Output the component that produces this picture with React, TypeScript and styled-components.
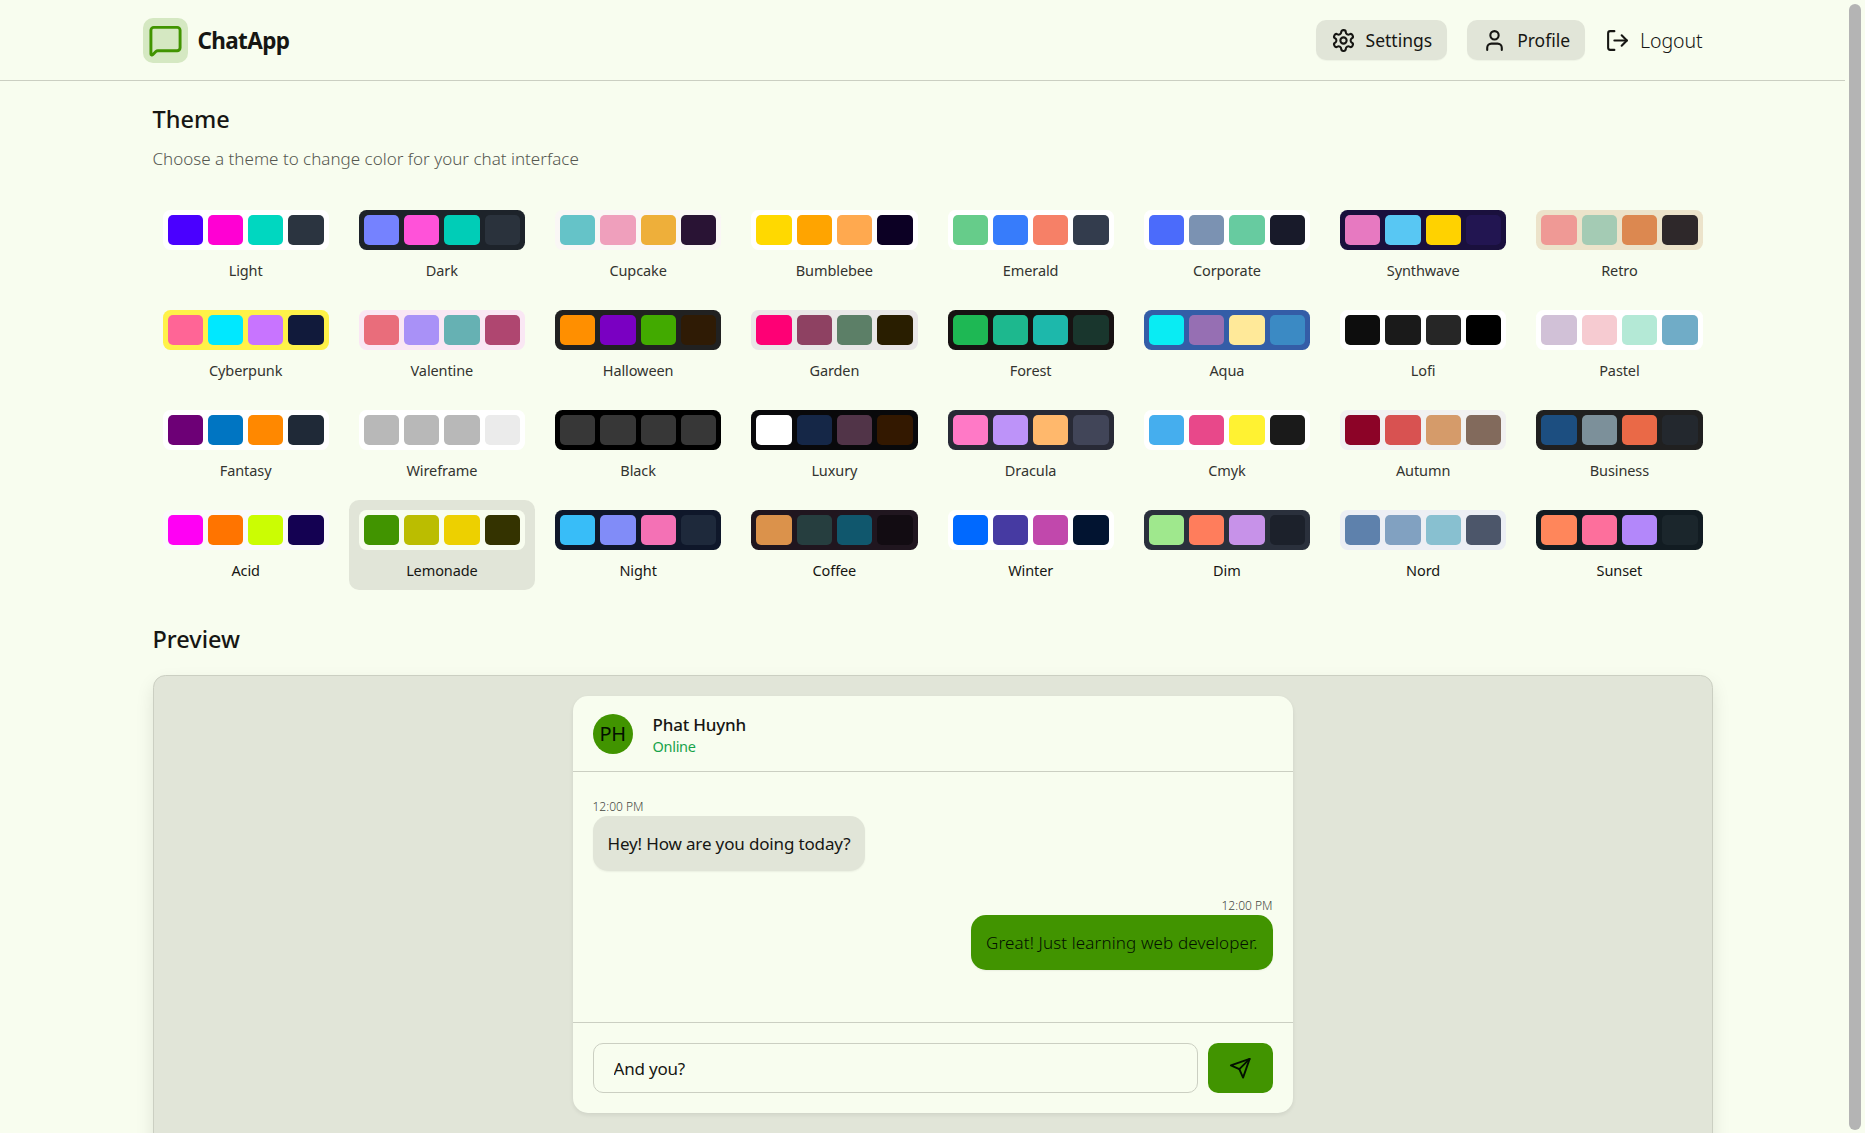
import React from "react";
import styled, { createGlobalStyle } from "styled-components";
import { LogOut, MessageSquare, User } from "lucide-react";

const THEMES: { name: string; bg: string; colors: string[] }[] = [
  { name: "Light", bg: "#ffffff", colors: ["#4a00ff", "#ff00d3", "#00d7c0", "#2b3440"] },
  { name: "Dark", bg: "#1d232a", colors: ["#7582ff", "#ff52d9", "#00cdb7", "#2a323c"] },
  { name: "Cupcake", bg: "#faf7f5", colors: ["#65c3c8", "#ef9fbc", "#eeaf3a", "#291334"] },
  { name: "Bumblebee", bg: "#ffffff", colors: ["#ffd900", "#ffa400", "#ffa94f", "#0c0024"] },
  { name: "Emerald", bg: "#ffffff", colors: ["#66cc8a", "#377cfb", "#f68067", "#333c4d"] },
  { name: "Corporate", bg: "#ffffff", colors: ["#4b6bfb", "#7b92b2", "#67cba0", "#181a2a"] },
  { name: "Synthwave", bg: "#1a103d", colors: ["#e779c1", "#58c7f3", "#ffd200", "#221551"] },
  { name: "Retro", bg: "#ece3ca", colors: ["#ef9995", "#a4cbb4", "#dc8850", "#2e282a"] },
  { name: "Cyberpunk", bg: "#fff248", colors: ["#ff6596", "#00e8ff", "#c874ff", "#111a3b"] },
  { name: "Valentine", bg: "#fae7f4", colors: ["#e96d7b", "#a991f7", "#66b1b3", "#af4670"] },
  { name: "Halloween", bg: "#212121", colors: ["#ff8f00", "#7a00c2", "#42aa00", "#2f1b05"] },
  { name: "Garden", bg: "#e9e7e7", colors: ["#fe0075", "#8e4162", "#5c7f67", "#291e00"] },
  { name: "Forest", bg: "#171212", colors: ["#1eb854", "#1db88e", "#1db8ab", "#19362d"] },
  { name: "Aqua", bg: "#345da7", colors: ["#09ecf3", "#966fb3", "#ffe999", "#3b8ac4"] },
  { name: "Lofi", bg: "#ffffff", colors: ["#0d0d0d", "#1a1a1a", "#262626", "#000000"] },
  { name: "Pastel", bg: "#ffffff", colors: ["#d1c1d7", "#f6cbd1", "#b4e9d6", "#70acc7"] },
  { name: "Fantasy", bg: "#ffffff", colors: ["#6d0076", "#0075c2", "#ff8800", "#1f2937"] },
  { name: "Wireframe", bg: "#ffffff", colors: ["#b8b8b8", "#b8b8b8", "#b8b8b8", "#ebebeb"] },
  { name: "Black", bg: "#000000", colors: ["#373737", "#373737", "#373737", "#373737"] },
  { name: "Luxury", bg: "#09090b", colors: ["#ffffff", "#152747", "#513448", "#331800"] },
  { name: "Dracula", bg: "#282a36", colors: ["#ff79c6", "#bd93f9", "#ffb86c", "#414558"] },
  { name: "Cmyk", bg: "#ffffff", colors: ["#45aeee", "#e8488a", "#fff232", "#1a1a1a"] },
  { name: "Autumn", bg: "#f1f1f1", colors: ["#8c0327", "#d85251", "#d59b6a", "#826a5c"] },
  { name: "Business", bg: "#202020", colors: ["#1c4e80", "#7c909a", "#ea6947", "#23282e"] },
  { name: "Acid", bg: "#fafafa", colors: ["#ff00f4", "#ff7400", "#cbfd03", "#140152"] },
  { name: "Lemonade", bg: "#f8fdef", colors: ["#419400", "#bbbd00", "#edd000", "#343300"] },
  { name: "Night", bg: "#0f172a", colors: ["#38bdf8", "#818cf8", "#f471b5", "#1e293b"] },
  { name: "Coffee", bg: "#20161f", colors: ["#db924b", "#263e3f", "#10576d", "#120c12"] },
  { name: "Winter", bg: "#ffffff", colors: ["#0069ff", "#463aa2", "#c148ac", "#021431"] },
  { name: "Dim", bg: "#2a303c", colors: ["#9fe88d", "#ff7d5c", "#c792e9", "#1c212b"] },
  { name: "Nord", bg: "#eceff4", colors: ["#5e81ac", "#81a1c1", "#88c0d0", "#4c566a"] },
  { name: "Sunset", bg: "#121c22", colors: ["#ff865b", "#fd6f9c", "#b387fa", "#1b262c"] },
];

const GlobalStyle = createGlobalStyle`
  html, body {
    margin: 0;
    height: 100%;
    overflow: hidden;
    background: #f8fdef;
    color: #161613;
    font-family: "Noto Sans", "Open Sans", sans-serif;
  }
  * { box-sizing: border-box; }
`;

const Page = styled.div`
  display: flex;
  height: 100vh;
  overflow: hidden;
`;

const Main = styled.div`
  flex: 1;
  min-width: 0;
  height: 100%;
  overflow: hidden;
`;

const ScrollTrack = styled.div`
  width: 20px;
  flex: none;
  padding: 4px 4px 3px 4px;
`;

const ScrollThumb = styled.div`
  width: 12px;
  height: 100%;
  background: #b4b4b4;
  border-radius: 6px;
`;

const Header = styled.header`
  height: 81px;
  border-bottom: 1px solid #cbcfc2;
`;

const HeaderInner = styled.div`
  width: 1600px;
  height: 80px;
  margin: 0 auto;
  padding: 0 20px;
  display: flex;
  align-items: center;
  justify-content: space-between;
`;

const Brand = styled.div`
  display: flex;
  align-items: center;
  gap: 10px;
`;

const LogoBox = styled.div`
  width: 45px;
  height: 45px;
  border-radius: 10px;
  background: #d5e8c2;
  color: #419400;
  display: flex;
  align-items: center;
  justify-content: center;
`;

const BrandName = styled.h1`
  margin: 0;
  font-size: 22.5px;
  font-weight: 700;
  letter-spacing: -0.65px;
`;

const Nav = styled.nav`
  display: flex;
  align-items: center;
  gap: 20px;
`;

const NavButton = styled.a`
  height: 40px;
  padding: 0 15px;
  display: flex;
  align-items: center;
  gap: 10px;
  border-radius: 10px;
  background: #e1e5d8;
  font-size: 17.5px;
  box-shadow: 0 1px 1px rgba(0, 0, 0, 0.04);
`;

const LogoutLink = styled.a`
  display: flex;
  align-items: center;
  gap: 10px;
  font-size: 19.5px;
  font-weight: 300;
  letter-spacing: -0.1px;
`;

const Content = styled.main`
  width: 1560px;
  margin-left: 152.5px;
  padding-top: 20.5px;
`;

const Heading = styled.h2`
  margin: 0;
  font-size: 23.5px;
  line-height: 35px;
  font-weight: 500;
`;

const Subtitle = styled.p`
  margin: 9px 0 0;
  font-size: 17px;
  line-height: 25px;
  font-weight: 300;
  color: #55574f;
`;

const ThemeGrid = styled.div`
  display: grid;
  grid-template-columns: repeat(8, 1fr);
  gap: 10px;
  margin-top: 29.5px;
`;

const ThemeCell = styled.button<{ $active?: boolean }>`
  border: 0;
  height: 90px;
  padding: 10px;
  display: flex;
  flex-direction: column;
  align-items: stretch;
  justify-content: flex-start;
  gap: 10px;
  border-radius: 10px;
  background: ${(p) => (p.$active ? "#e1e5d8" : "transparent")};
  font: inherit;
`;

const SwatchRow = styled.div<{ $bg: string }>`
  height: 40px;
  flex: none;
  padding: 5px;
  display: grid;
  grid-template-columns: repeat(4, 1fr);
  gap: 5px;
  border-radius: 7.5px;
  background: ${(p) => p.$bg};
`;

const Swatch = styled.div<{ $color: string }>`
  border-radius: 5px;
  background: ${(p) => p.$color};
`;

const ThemeName = styled.span<{ $strong?: boolean }>`
  display: block;
  text-align: center;
  font-size: 14.5px;
  line-height: 21px;
  letter-spacing: -0.1px;
  color: ${(p) => (p.$strong ? "#161613" : "#33342f")};
`;

const PreviewHeading = styled(Heading)`
  margin-top: 32px;
`;

const PreviewPanel = styled.div`
  margin-top: 18px;
  height: 500px;
  padding: 20px;
  background: #e1e5d8;
  border: 1px solid #cbcfc2;
  border-radius: 12.5px;
  box-shadow: 0 8px 18px rgba(0, 0, 0, 0.1);
`;

const ChatCard = styled.div`
  width: 720px;
  height: 417px;
  margin: 0 auto;
  display: flex;
  flex-direction: column;
  background: #f8fdef;
  border-radius: 15px;
  box-shadow: 0 2px 4px rgba(0, 0, 0, 0.08);
`;

const ChatHeader = styled.div`
  height: 76px;
  padding: 0 20px;
  display: flex;
  align-items: center;
  gap: 20px;
  border-bottom: 1px solid #cbcfc2;
`;

const Avatar = styled.div`
  width: 40px;
  height: 40px;
  flex: none;
  border-radius: 50%;
  background: #419400;
  color: #021000;
  display: flex;
  align-items: center;
  justify-content: center;
  font-size: 20px;
  letter-spacing: -0.5px;
`;

const PersonInfo = styled.div`
  display: flex;
  flex-direction: column;
  padding-top: 2px;
`;

const PersonName = styled.span`
  font-size: 17px;
  line-height: 24px;
  font-weight: 500;
  letter-spacing: -0.2px;
`;

const PersonStatus = styled.span`
  font-size: 14.5px;
  line-height: 19px;
  letter-spacing: -0.3px;
  color: #16a34a;
`;

const Messages = styled.div`
  flex: 1;
  padding: 25px 20px 0;
  display: flex;
  flex-direction: column;
  gap: 24.5px;
`;

const Message = styled.div<{ $mine?: boolean }>`
  display: flex;
  flex-direction: column;
  align-items: ${(p) => (p.$mine ? "flex-end" : "flex-start")};
`;

const Timestamp = styled.span`
  font-size: 12px;
  line-height: 19px;
  font-weight: 300;
  color: #44463f;
`;

const Bubble = styled.div<{ $mine?: boolean }>`
  height: 55px;
  padding: 0 15px;
  display: flex;
  align-items: center;
  border-radius: 15px;
  font-size: 17px;
  font-weight: ${(p) => (p.$mine ? 300 : 400)};
  letter-spacing: ${(p) => (p.$mine ? "0.13px" : "-0.15px")};
  background: ${(p) => (p.$mine ? "#419400" : "#e1e5d8")};
  color: ${(p) => (p.$mine ? "#021000" : "#161613")};
  box-shadow: 0 1px 2px rgba(0, 0, 0, 0.06);
`;

const Composer = styled.div`
  height: 91px;
  padding: 20px;
  display: flex;
  gap: 10px;
  border-top: 1px solid #cbcfc2;
`;

const ComposerInput = styled.input`
  flex: 1;
  min-width: 0;
  height: 50px;
  padding: 0 20px;
  border: 1px solid #cbcfc2;
  border-radius: 10px;
  background: transparent;
  color: #161613;
  font-family: inherit;
  font-size: 17px;
  letter-spacing: -0.2px;
  outline: none;
`;

const SendButton = styled.button`
  width: 65px;
  height: 50px;
  flex: none;
  border: 0;
  border-radius: 10px;
  background: #419400;
  color: #021000;
  display: flex;
  align-items: center;
  justify-content: center;
`;

const GearIcon = () => (
  <svg width="25" height="25" viewBox="0 0 24 24" fill="none" stroke="currentColor" strokeWidth="2" strokeLinecap="round" strokeLinejoin="round">
    <path d="M12.22 2h-.44a2 2 0 0 0-2 2v.18a2 2 0 0 1-1 1.73l-.43.25a2 2 0 0 1-2 0l-.15-.08a2 2 0 0 0-2.73.73l-.22.38a2 2 0 0 0 .73 2.73l.15.1a2 2 0 0 1 1 1.72v.51a2 2 0 0 1-1 1.74l-.15.09a2 2 0 0 0-.73 2.73l.22.38a2 2 0 0 0 2.73.73l.15-.08a2 2 0 0 1 2 0l.43.25a2 2 0 0 1 1 1.73V20a2 2 0 0 0 2 2h.44a2 2 0 0 0 2-2v-.18a2 2 0 0 1 1-1.73l.43-.25a2 2 0 0 1 2 0l.15.08a2 2 0 0 0 2.73-.73l.22-.39a2 2 0 0 0-.73-2.73l-.15-.08a2 2 0 0 1-1-1.74v-.5a2 2 0 0 1 1-1.74l.15-.09a2 2 0 0 0 .73-2.73l-.22-.38a2 2 0 0 0-2.73-.73l-.15.08a2 2 0 0 1-2 0l-.43-.25a2 2 0 0 1-1-1.73V4a2 2 0 0 0-2-2z" />
    <circle cx="12" cy="12" r="3" />
  </svg>
);

const PlaneIcon = () => (
  <svg width="22.5" height="22.5" viewBox="0 0 24 24" fill="none" stroke="currentColor" strokeWidth="2" strokeLinecap="round" strokeLinejoin="round">
    <path d="m22 2-7 20-4-9-9-4Z" />
    <path d="M22 2 11 13" />
  </svg>
);

export default function App() {
  return (
    <Page>
      <GlobalStyle />
      <Main>
        <Header>
          <HeaderInner>
            <Brand>
              <LogoBox>
                <MessageSquare size={35} strokeWidth={2} />
              </LogoBox>
              <BrandName>ChatApp</BrandName>
            </Brand>
            <Nav>
              <NavButton>
                <GearIcon />
                Settings
              </NavButton>
              <NavButton>
                <User size={25} strokeWidth={2} />
                Profile
              </NavButton>
              <LogoutLink>
                <LogOut size={25} strokeWidth={2} />
                Logout
              </LogoutLink>
            </Nav>
          </HeaderInner>
        </Header>
        <Content>
          <Heading>Theme</Heading>
          <Subtitle>Choose a theme to change color for your chat interface</Subtitle>
          <ThemeGrid>
            {THEMES.map((theme, i) => (
              <ThemeCell key={theme.name} $active={theme.name === "Lemonade"}>
                <SwatchRow $bg={theme.bg}>
                  {theme.colors.map((color, j) => (
                    <Swatch key={j} $color={color} />
                  ))}
                </SwatchRow>
                <ThemeName $strong={i >= 24}>{theme.name}</ThemeName>
              </ThemeCell>
            ))}
          </ThemeGrid>
          <PreviewHeading>Preview</PreviewHeading>
          <PreviewPanel>
            <ChatCard>
              <ChatHeader>
                <Avatar>PH</Avatar>
                <PersonInfo>
                  <PersonName>Phat Huynh</PersonName>
                  <PersonStatus>Online</PersonStatus>
                </PersonInfo>
              </ChatHeader>
              <Messages>
                <Message>
                  <Timestamp>12:00 PM</Timestamp>
                  <Bubble>Hey! How are you doing today?</Bubble>
                </Message>
                <Message $mine>
                  <Timestamp>12:00 PM</Timestamp>
                  <Bubble $mine>Great! Just learning web developer.</Bubble>
                </Message>
              </Messages>
              <Composer>
                <ComposerInput defaultValue="And you?" />
                <SendButton>
                  <PlaneIcon />
                </SendButton>
              </Composer>
            </ChatCard>
          </PreviewPanel>
        </Content>
      </Main>
      <ScrollTrack>
        <ScrollThumb />
      </ScrollTrack>
    </Page>
  );
}
